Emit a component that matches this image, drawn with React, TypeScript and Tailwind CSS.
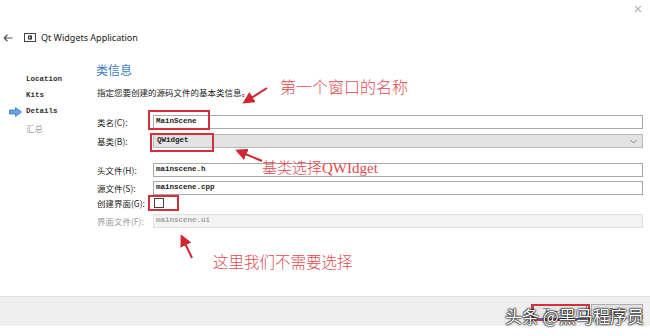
import React from "react";

const cjk = { fontFamily: '"Noto Sans CJK SC", "Noto Sans", sans-serif' };
const mono = { fontFamily: '"Liberation Mono", "DejaVu Sans Mono", monospace' };

function RedBox({ className }: { className: string }) {
  return <div className={"absolute border-2 border-[#d4303b] pointer-events-none " + className} />;
}

function Label({ children, muted }: { children: React.ReactNode; muted?: boolean }) {
  return (
    <div className={"w-[56px] shrink-0 text-[8.5px] leading-[14px] whitespace-nowrap " + (muted ? "text-[#9a9a9a]" : "text-[#222]")} style={cjk}>
      {children}
    </div>
  );
}

function TextBox({ value, disabled }: { value: string; disabled?: boolean }) {
  return (
    <div
      className={
        "flex-1 h-[14px] flex items-center pl-[2px] text-[7.5px] font-bold border " +
        (disabled ? "bg-[#f3f3f3] border-[#e2e2e2] text-[#a5a5a5]" : "bg-white border-[#a9a9a9] text-[#222]")
      }
      style={mono}
    >
      {value}
    </div>
  );
}

export default function App() {
  const navItems = ["Location", "Kits", "Details", "汇总"];
  return (
    <div className="relative w-[650px] h-[336px] bg-white overflow-hidden flex flex-col" style={cjk}>
      {/* top strip with close */}
      <div className="h-[28px] flex justify-end items-start pt-[5px] pr-[8px]">
        <svg width="8" height="8" viewBox="0 0 8 8">
          <path d="M1 1 L7 7 M7 1 L1 7" stroke="#b5b5b5" strokeWidth="1.1" />
        </svg>
      </div>

      {/* title row */}
      <div className="h-[19px] flex items-center pl-[3px]">
        <svg width="10" height="8" viewBox="0 0 10 8" className="mr-[11px]">
          <path d="M1 4 H9.5 M1 4 L4.5 0.8 M1 4 L4.5 7.2" stroke="#555" strokeWidth="1.2" fill="none" />
        </svg>
        <svg width="12" height="9" viewBox="0 0 12 9" className="mr-[5px]">
          <rect x="0.5" y="0.5" width="11" height="8" fill="#fff" stroke="#444" strokeWidth="1" />
          <rect x="4" y="2.5" width="4" height="4" fill="#333" />
          <path d="M5 3.5 L7 4.5 L5 5.5 Z" fill="#fff" />
        </svg>
        <span className="text-[9px] text-[#222]" style={{ fontFamily: '"Noto Sans", sans-serif' }}>
          Qt Widgets Application
        </span>
      </div>

      {/* body */}
      <div className="flex flex-1">
        <nav className="w-[96px] shrink-0 pt-[25px] pl-[9px]">
          {navItems.map((n) => (
            <div key={n} className="flex items-center h-[16px]">
              <div className="w-[17px] flex items-center">
                {n === "Details" && (
                  <svg width="13" height="10" viewBox="0 0 13 10">
                    <path d="M0.5 3 H6.5 V0.5 L12.5 5 L6.5 9.5 V7 H0.5 Z" fill="#6aa6e3" stroke="#3a78c2" strokeWidth="0.8" />
                  </svg>
                )}
              </div>
              <span
                className={n === "汇总" ? "text-[8.5px] text-[#a0a0a0]" : "text-[7.5px] font-bold text-[#333]"}
                style={n === "汇总" ? cjk : mono}
              >
                {n}
              </span>
            </div>
          ))}
        </nav>

        <main className="flex-1 pr-[7px] pt-[15px]">
          <div className="text-[12px] leading-[16px] text-[#3d7cc6]">类信息</div>
          <div className="mt-[8px] text-[8.5px] leading-[12px] text-[#222] pl-[1px]">
            指定您要创建的源码文件的基本类信息。
          </div>

          <div className="pl-[1px]">
            <div className="mt-[17px] flex h-[14px]">
              <Label>类名(C):</Label>
              <div className="relative flex-1 flex">
                <TextBox value="MainScene" />
                <RedBox className="left-[-5px] top-[-5px] w-[62px] h-[20px]" />
              </div>
            </div>

            <div className="mt-[5px] flex h-[14px]">
              <Label>基类(B):</Label>
              <div className="relative flex-1 h-[14px] flex items-center justify-between pl-[3px] pr-[5px] bg-[#e3e3e3] border border-[#b9b9b9] text-[7.5px] font-bold text-[#222]" style={mono}>
                <span>QWidget</span>
                <svg width="7" height="5" viewBox="0 0 7 5">
                  <path d="M0.5 1 L3.5 4 L6.5 1" stroke="#777" strokeWidth="0.9" fill="none" />
                </svg>
                <RedBox className="left-[-4px] top-[-2px] w-[64px] h-[19px]" />
              </div>
            </div>

            <div className="mt-[15px] flex h-[14px]">
              <Label>头文件(H):</Label>
              <TextBox value="mainscene.h" />
            </div>

            <div className="mt-[4px] flex h-[14px]">
              <Label>源文件(S):</Label>
              <TextBox value="mainscene.cpp" />
            </div>

            <div className="mt-[1px] flex h-[14px] items-center">
              <Label>创建界面(G):</Label>
              <div className="relative flex items-center pl-[1px]">
                <div className="w-[10px] h-[10px] border border-[#444] bg-white" />
                <RedBox className="left-[-5px] top-[-3px] w-[31px] h-[16px]" />
              </div>
            </div>

            <div className="mt-[4px] flex h-[14px]">
              <Label muted>界面文件(F):</Label>
              <TextBox value="mainscene.ui" disabled />
            </div>
          </div>
        </main>
      </div>

      {/* bottom bar */}
      <div className="h-[30px] bg-[#efefef] border-t border-[#e0e0e0] flex items-center justify-end pr-[7px] gap-[4px]">
        <div className="relative w-[54px] h-[14px] bg-[#e6e6e6] border border-[#3d7cc6] flex items-center justify-center text-[8px] text-[#444]">
          下一步(N)
          <RedBox className="left-[-3px] top-[-2px] w-[59px] h-[17px]" />
        </div>
        <div className="w-[52px] h-[15px] bg-[#e1e1e1] border border-[#adadad] flex items-center justify-center text-[8px] text-[#444]">
          取消
        </div>
      </div>
      <div className="h-[10px] bg-white" />

      {/* annotation arrows */}
      <svg className="absolute inset-0 pointer-events-none" width="650" height="336" viewBox="0 0 650 336">
        <defs>
          <marker id="ah" markerWidth="6" markerHeight="6" refX="4.5" refY="3" orient="auto" markerUnits="strokeWidth">
            <path d="M0 0 L6 3 L0 6 Z" fill="#cf2630" />
          </marker>
        </defs>
        <line x1="267" y1="88" x2="245" y2="102" stroke="#cf2630" strokeWidth="2" markerEnd="url(#ah)" />
        <line x1="262" y1="161" x2="238" y2="151" stroke="#cf2630" strokeWidth="2" markerEnd="url(#ah)" />
        <line x1="192" y1="258" x2="182" y2="237" stroke="#cf2630" strokeWidth="2" markerEnd="url(#ah)" />
      </svg>

      {/* annotation texts */}
      <div className="absolute left-[280px] top-[76px] text-[16px] leading-[20px] font-light text-[#e0494f] whitespace-nowrap">
        第一个窗口的名称
      </div>
      <div className="absolute left-[262px] top-[157px] text-[15px] leading-[20px] font-light text-[#e0494f] whitespace-nowrap">
        基类选择<span style={{ fontFamily: '"Liberation Serif", serif' }}>QWIdget</span>
      </div>
      <div className="absolute left-[213px] top-[251px] text-[15.5px] leading-[20px] font-light text-[#e0494f] whitespace-nowrap">
        这里我们不需要选择
      </div>

      {/* watermark */}
      <div className="absolute left-[505px] top-[305px] text-[17px] leading-[22px] text-white whitespace-nowrap [text-shadow:0_0_1px_#000,0_0_2px_#000,0_0_2px_#000]">
        头条 @黑马程序员
      </div>
    </div>
  );
}
